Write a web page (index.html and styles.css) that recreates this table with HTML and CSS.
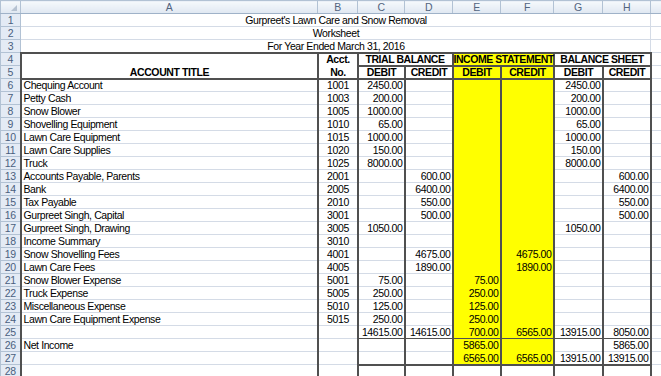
FILE: index.html
```html
<!DOCTYPE html>
<html lang="en">
<head>
<meta charset="utf-8">
<title>Worksheet</title>
<link rel="stylesheet" href="styles.css">
</head>
<body>
<table class="sheet">
  <colgroup>
    <col class="w-rh"><col class="w-a"><col class="w-b"><col class="w-c"><col class="w-d"><col class="w-e"><col class="w-f"><col class="w-g"><col class="w-h"><col class="w-i">
  </colgroup>
  <tr class="hdr">
    <th class="corner"><svg width="20" height="12" viewBox="0 0 20 12"><polygon points="16,4 16,10 10,10" fill="#b6c2d1"/></svg></th>
    <th>A</th><th>B</th><th>C</th><th>D</th><th>E</th><th>F</th><th>G</th><th>H</th><th></th>
  </tr>
  <tr><th>1</th><td colspan="8" class="title">Gurpreet's Lawn Care and Snow Removal</td><td></td></tr>
  <tr><th>2</th><td colspan="8" class="title">Worksheet</td><td></td></tr>
  <tr><th>3</th><td colspan="8" class="title">For Year Ended March 31, 2016</td><td></td></tr>
  <tr>
    <th>4</th>
    <td rowspan="2" class="a top btm bold ctr">ACCOUNT TITLE</td>
    <td class="b top nob bold ctr">Acct.</td>
    <td colspan="2" class="d top sub bold ctr">TRIAL BALANCE</td>
    <td colspan="2" class="f y top sub bold ctr">INCOME STATEMENT</td>
    <td colspan="2" class="h top sub bold ctr">BALANCE SHEET</td>
    <td></td>
  </tr>
  <tr>
    <th>5</th>
    <td class="b not btm bold ctr">No.</td>
    <td class="c btm bold ctr">DEBIT</td><td class="d btm bold ctr">CREDIT</td>
    <td class="e y btm bold ctr">DEBIT</td><td class="f y btm bold ctr">CREDIT</td>
    <td class="g btm bold ctr">DEBIT</td><td class="h btm bold ctr">CREDIT</td>
    <td></td>
  </tr>
  <tr><th>6</th><td class="a">Chequing Account</td><td class="b ctr">1001</td><td class="c num">2450.00</td><td class="d num"></td><td class="e y num"></td><td class="f y num"></td><td class="g num">2450.00</td><td class="h num"></td><td></td></tr>
  <tr><th>7</th><td class="a">Petty Cash</td><td class="b ctr">1003</td><td class="c num">200.00</td><td class="d num"></td><td class="e y num"></td><td class="f y num"></td><td class="g num">200.00</td><td class="h num"></td><td></td></tr>
  <tr><th>8</th><td class="a">Snow Blower</td><td class="b ctr">1005</td><td class="c num">1000.00</td><td class="d num"></td><td class="e y num"></td><td class="f y num"></td><td class="g num">1000.00</td><td class="h num"></td><td></td></tr>
  <tr><th>9</th><td class="a">Shovelling Equipment</td><td class="b ctr">1010</td><td class="c num">65.00</td><td class="d num"></td><td class="e y num"></td><td class="f y num"></td><td class="g num">65.00</td><td class="h num"></td><td></td></tr>
  <tr><th>10</th><td class="a">Lawn Care Equipment</td><td class="b ctr">1015</td><td class="c num">1000.00</td><td class="d num"></td><td class="e y num"></td><td class="f y num"></td><td class="g num">1000.00</td><td class="h num"></td><td></td></tr>
  <tr><th>11</th><td class="a">Lawn Care Supplies</td><td class="b ctr">1020</td><td class="c num">150.00</td><td class="d num"></td><td class="e y num"></td><td class="f y num"></td><td class="g num">150.00</td><td class="h num"></td><td></td></tr>
  <tr><th>12</th><td class="a">Truck</td><td class="b ctr">1025</td><td class="c num">8000.00</td><td class="d num"></td><td class="e y num"></td><td class="f y num"></td><td class="g num">8000.00</td><td class="h num"></td><td></td></tr>
  <tr><th>13</th><td class="a">Accounts Payable, Parents</td><td class="b ctr">2001</td><td class="c num"></td><td class="d num">600.00</td><td class="e y num"></td><td class="f y num"></td><td class="g num"></td><td class="h num">600.00</td><td></td></tr>
  <tr><th>14</th><td class="a">Bank</td><td class="b ctr">2005</td><td class="c num"></td><td class="d num">6400.00</td><td class="e y num"></td><td class="f y num"></td><td class="g num"></td><td class="h num">6400.00</td><td></td></tr>
  <tr><th>15</th><td class="a">Tax Payable</td><td class="b ctr">2010</td><td class="c num"></td><td class="d num">550.00</td><td class="e y num"></td><td class="f y num"></td><td class="g num"></td><td class="h num">550.00</td><td></td></tr>
  <tr><th>16</th><td class="a">Gurpreet Singh, Capital</td><td class="b ctr">3001</td><td class="c num"></td><td class="d num">500.00</td><td class="e y num"></td><td class="f y num"></td><td class="g num"></td><td class="h num">500.00</td><td></td></tr>
  <tr><th>17</th><td class="a">Gurpreet Singh, Drawing</td><td class="b ctr">3005</td><td class="c num">1050.00</td><td class="d num"></td><td class="e y num"></td><td class="f y num"></td><td class="g num">1050.00</td><td class="h num"></td><td></td></tr>
  <tr><th>18</th><td class="a">Income Summary</td><td class="b ctr">3010</td><td class="c num"></td><td class="d num"></td><td class="e y num"></td><td class="f y num"></td><td class="g num"></td><td class="h num"></td><td></td></tr>
  <tr><th>19</th><td class="a">Snow Shovelling Fees</td><td class="b ctr">4001</td><td class="c num"></td><td class="d num">4675.00</td><td class="e y num"></td><td class="f y num">4675.00</td><td class="g num"></td><td class="h num"></td><td></td></tr>
  <tr><th>20</th><td class="a">Lawn Care Fees</td><td class="b ctr">4005</td><td class="c num"></td><td class="d num">1890.00</td><td class="e y num"></td><td class="f y num">1890.00</td><td class="g num"></td><td class="h num"></td><td></td></tr>
  <tr><th>21</th><td class="a">Snow Blower Expense</td><td class="b ctr">5001</td><td class="c num">75.00</td><td class="d num"></td><td class="e y num">75.00</td><td class="f y num"></td><td class="g num"></td><td class="h num"></td><td></td></tr>
  <tr><th>22</th><td class="a">Truck Expense</td><td class="b ctr">5005</td><td class="c num">250.00</td><td class="d num"></td><td class="e y num">250.00</td><td class="f y num"></td><td class="g num"></td><td class="h num"></td><td></td></tr>
  <tr><th>23</th><td class="a">Miscellaneous Expense</td><td class="b ctr">5010</td><td class="c num">125.00</td><td class="d num"></td><td class="e y num">125.00</td><td class="f y num"></td><td class="g num"></td><td class="h num"></td><td></td></tr>
  <tr><th>24</th><td class="a">Lawn Care Equipment Expense</td><td class="b ctr">5015</td><td class="c num">250.00</td><td class="d num"></td><td class="e y num">250.00</td><td class="f y num"></td><td class="g num"></td><td class="h num"></td><td></td></tr>
  <tr><th>25</th><td class="a"></td><td class="b"></td><td class="c num ln-t ln-b">14615.00</td><td class="d num ln-t ln-b">14615.00</td><td class="e y num ln-t ln-b">700.00</td><td class="f y num ln-t ln-b">6565.00</td><td class="g num ln-t ln-b">13915.00</td><td class="h num ln-t ln-b">8050.00</td><td></td></tr>
  <tr><th>26</th><td class="a">Net Income</td><td class="b"></td><td class="c num"></td><td class="d num"></td><td class="e y num">5865.00</td><td class="f y num"></td><td class="g num"></td><td class="h num">5865.00</td><td></td></tr>
  <tr><th>27</th><td class="a"></td><td class="b"></td><td class="c num ln-b2"></td><td class="d num ln-b2"></td><td class="e y num ln-t ln-b2">6565.00</td><td class="f y num ln-t ln-b2">6565.00</td><td class="g num ln-t ln-b2">13915.00</td><td class="h num ln-t ln-b2">13915.00</td><td></td></tr>
  <tr><th>28</th><td class="a"></td><td class="b"></td><td class="c"></td><td class="d"></td><td class="e"></td><td class="f"></td><td class="g"></td><td class="h"></td><td></td></tr>
</table>
</body>
</html>
```
FILE: styles.css
```css
html, body {
  margin: 0;
  padding: 0;
  background: #ffffff;
  overflow: hidden;
}

.sheet {
  border-collapse: collapse;
  table-layout: fixed;
  width: 661px;
  font-family: "Liberation Sans", Arial, sans-serif;
  font-size: 10.5px;
  letter-spacing: -0.4px;
  color: #000000;
}

.w-rh { width: 20px; }
.w-a { width: 297px; }
.w-b { width: 40px; }
.w-c { width: 47px; }
.w-d { width: 48px; }
.w-e { width: 48px; }
.w-f { width: 53px; }
.w-g { width: 49px; }
.w-h { width: 48px; }
.w-i { width: 11px; }

.sheet tr { height: 13px; }
.sheet tr.hdr { height: 12px; }

.sheet td {
  border: 1px solid #d4dbe6;
  padding: 0 1px 0 2px;
  line-height: 11px;
  vertical-align: bottom;
  white-space: nowrap;
  overflow: hidden;
  background: #ffffff;
}

.sheet th {
  border: 1px solid #b2c2d4;
  background: #e4ebf5;
  color: #4a5f7e;
  font-weight: normal;
  font-size: 10.5px;
  line-height: 10px;
  padding: 0;
  text-align: center;
  vertical-align: middle;
  overflow: hidden;
}

.sheet tr.hdr th {
  background: linear-gradient(#f6f9fc, #dfe7f1);
  color: #52647f;
  border-bottom-color: #9fb2c8;
}

.sheet th.corner {
  padding: 0;
  line-height: 0;
}

.corner svg { display: block; }

.title { text-align: center; }
.ctr { text-align: center; }
.num { text-align: right; }
.bold { font-weight: bold; }

/* thick column rules (rows 4 to 28) */
.sheet td.a { border-left: 2px solid #505050; border-right: 2px solid #505050; }
.sheet td.b,
.sheet td.c,
.sheet td.d,
.sheet td.e,
.sheet td.f,
.sheet td.g,
.sheet td.h { border-right: 2px solid #505050; }

/* yellow income statement columns */
.sheet td.y {
  background: #ffff00;
  border-top: 1px solid #ffff00;
  border-bottom: 1px solid #ffff00;
}

/* horizontal header rules */
.sheet td.top { border-top: 2px solid #505050; }
.sheet td.sub {
  border-bottom: 2px solid #505050;
  padding: 0;
  overflow: visible;
  letter-spacing: -0.45px;
}
.sheet td.btm { border-bottom: 2px solid #505050; }
.sheet td.nob { border-bottom: 1px solid #ffffff; }
.sheet td.not { border-top: 1px solid #ffffff; }

/* total rules */
.sheet td.ln-t { border-top: 1px solid #505050; }
.sheet td.ln-b { border-bottom: 1px solid #505050; }
.sheet td.ln-b2 { border-bottom: 2px solid #505050; }
```
